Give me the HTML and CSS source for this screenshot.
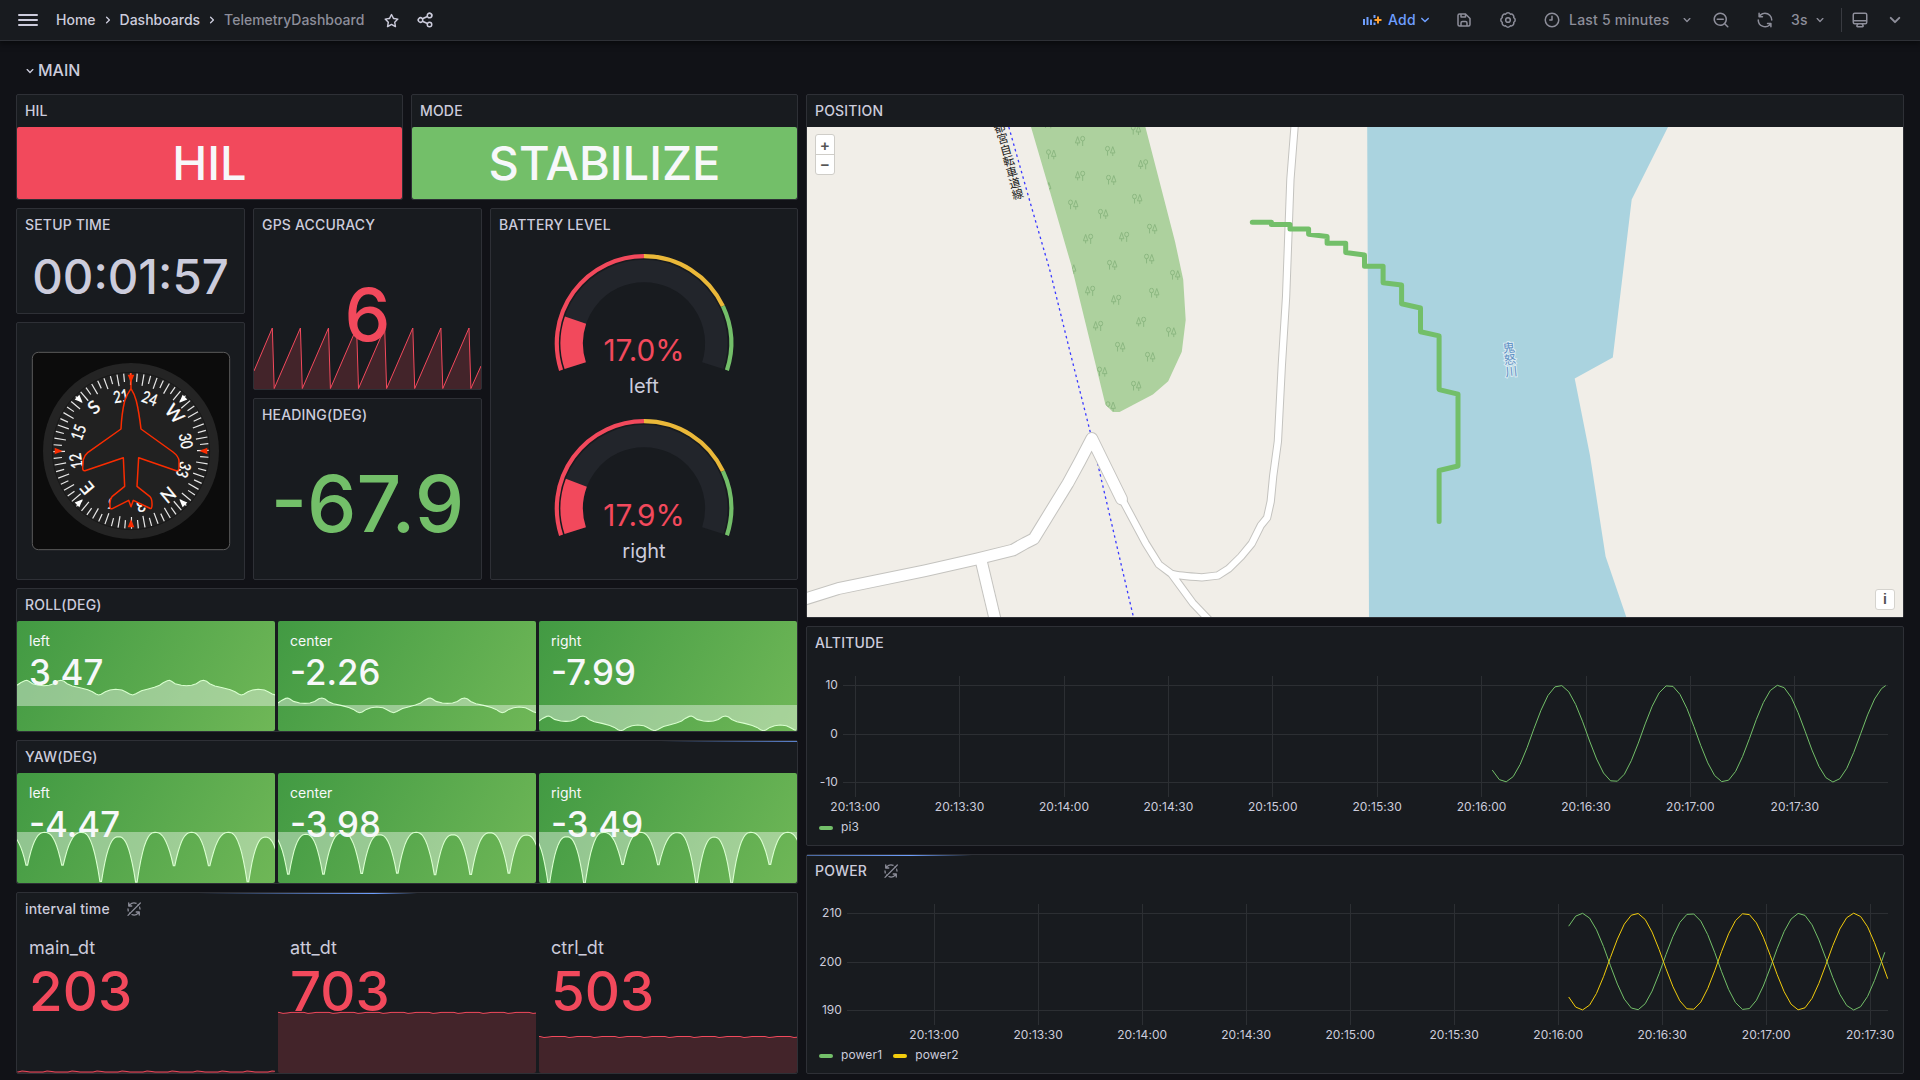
FILE: index.html
```html
<!DOCTYPE html>
<html lang="en">
<head>
<meta charset="utf-8">
<title>TelemetryDashboard - Dashboards</title>
<link rel="stylesheet" href="styles.css">
</head>
<body>
<svg class="defs" width="0" height="0" aria-hidden="true">
  <symbol id="i-down" viewBox="0 0 24 24"><path d="M17,9.17a1,1,0,0,0-1.41,0L12,12.71,8.46,9.17a1,1,0,0,0-1.41,0,1,1,0,0,0,0,1.42l4.24,4.24a1,1,0,0,0,1.42,0L17,10.59A1,1,0,0,0,17,9.17Z"/></symbol>
  <symbol id="i-right" viewBox="0 0 24 24"><path d="M14.83,11.29,10.59,7.05a1,1,0,0,0-1.42,0,1,1,0,0,0,0,1.41L12.71,12,9.17,15.54a1,1,0,0,0,0,1.41,1,1,0,0,0,.71.29,1,1,0,0,0,.71-.29l4.24-4.24A1,1,0,0,0,14.83,11.29Z"/></symbol>
  <symbol id="i-star" viewBox="0 0 24 24"><path d="M22,9.67A1,1,0,0,0,21.14,9l-5.69-.83L12.9,3a1,1,0,0,0-1.8,0L8.55,8.16,2.86,9a1,1,0,0,0-.81.68,1,1,0,0,0,.25,1l4.13,4-1,5.68A1,1,0,0,0,6.9,21.44L12,18.77l5.1,2.67a.93.93,0,0,0,.46.12,1,1,0,0,0,.59-.19,1,1,0,0,0,.4-1l-1-5.68,4.13-4A1,1,0,0,0,22,9.67Zm-6.15,4a1,1,0,0,0-.29.88l.72,4.2-3.76-2a1.06,1.06,0,0,0-.94,0l-3.76,2,.72-4.2a1,1,0,0,0-.29-.88l-3-3,4.21-.61a1,1,0,0,0,.76-.55L12,5.7l1.88,3.82a1,1,0,0,0,.76.55l4.21.61Z"/></symbol>
  <symbol id="i-share" viewBox="0 0 24 24"><path d="M18,14a4,4,0,0,0-3.08,1.48l-5.1-2.35a3.64,3.64,0,0,0,0-2.26l5.1-2.35A4.17,4.17,0,1,0,14,6a4.71,4.71,0,0,0,.07.71L8.79,9.14a4,4,0,1,0,0,5.72l5.28,2.43A4.71,4.71,0,0,0,14,18a4,4,0,1,0,4-4ZM18,4a2,2,0,1,1-2,2A2,2,0,0,1,18,4ZM6,14a2,2,0,1,1,2-2A2,2,0,0,1,6,14Zm12,6a2,2,0,1,1,2-2A2,2,0,0,1,18,20Z"/></symbol>
  <symbol id="i-save" viewBox="0 0 24 24"><path d="M20.71,9.29l-6-6a1,1,0,0,0-.32-.21A1.09,1.09,0,0,0,14,3H6A3,3,0,0,0,3,6V18a3,3,0,0,0,3,3H18a3,3,0,0,0,3-3V10A1,1,0,0,0,20.71,9.29ZM9,5h4V7H9Zm6,14H9V16a1,1,0,0,1,1-1h4a1,1,0,0,1,1,1Zm4-1a1,1,0,0,1-1,1H17V16a3,3,0,0,0-3-3H10a3,3,0,0,0-3,3v3H6a1,1,0,0,1-1-1V6A1,1,0,0,1,6,5H7V8A1,1,0,0,0,8,9h6a1,1,0,0,0,1-1V6.41l4,4Z"/></symbol>
  <symbol id="i-gear" viewBox="0 0 24 24"><g fill="none" stroke="currentColor" stroke-width="2" stroke-linejoin="round" transform="translate(12 12)"><path d="M3.18-7.67A3.6 3.6 0 0 1 7.67-3.18A3.6 3.6 0 0 1 7.67 3.18A3.6 3.6 0 0 1 3.18 7.67A3.6 3.6 0 0 1-3.18 7.67A3.6 3.6 0 0 1-7.67 3.18A3.6 3.6 0 0 1-7.67-3.18A3.6 3.6 0 0 1-3.18-7.67A3.6 3.6 0 0 1 3.18-7.67Z"/><circle r="3.1"/></g></symbol>
  <symbol id="i-clock" viewBox="0 0 24 24"><path d="M12,2A10,10,0,1,0,22,12,10,10,0,0,0,12,2Zm0,18a8,8,0,1,1,8-8A8,8,0,0,1,12,20ZM12,6a1,1,0,0,0-1,1v4H9a1,1,0,0,0,0,2h3a1,1,0,0,0,1-1V7A1,1,0,0,0,12,6Z"/></symbol>
  <symbol id="i-zoomout" viewBox="0 0 24 24"><path d="M21.71,20.29,18,16.61A9,9,0,1,0,16.61,18l3.68,3.68a1,1,0,0,0,1.42,0A1,1,0,0,0,21.71,20.29ZM11,18a7,7,0,1,1,7-7A7,7,0,0,1,11,18Zm4-8H7a1,1,0,0,0,0,2h8a1,1,0,0,0,0-2Z"/></symbol>
  <symbol id="i-sync" viewBox="0 0 24 24"><path d="M19.91,15.51H15.38a1,1,0,0,0,0,2h2.4A8,8,0,0,1,4,12a1,1,0,1,0-2,0,10,10,0,0,0,16.88,7.23V21a1,1,0,0,0,2,0V16.5A1,1,0,0,0,19.91,15.51ZM12,2A10,10,0,0,0,5.12,4.77V3a1,1,0,0,0-2,0V7.5a1,1,0,0,0,1,1h4.5a1,1,0,0,0,0-2H6.22A8,8,0,0,1,20,12a1,1,0,0,0,2,0A10,10,0,0,0,12,2Z"/></symbol>
  <symbol id="i-syncoff" viewBox="0 0 24 24"><use href="#i-sync"/><path d="M1 20L20 1M4 23L23 4" stroke="#181b1f" stroke-width="2.2"/><path d="M3 21.500L21.500 3" stroke="currentColor" stroke-width="1.900" stroke-linecap="round"/></symbol>
  <symbol id="i-monitor" viewBox="0 0 24 24"><path d="M19,2H5A3,3,0,0,0,2,5V15a3,3,0,0,0,3,3H7.64l-.58,1a2,2,0,0,0,0,2,2,2,0,0,0,1.75,1h6.46A2,2,0,0,0,17,21a2,2,0,0,0,0-2l-.59-1H19a3,3,0,0,0,3-3V5A3,3,0,0,0,19,2ZM8.77,20,10,18H14l1.2,2ZM20,15a1,1,0,0,1-1,1H5a1,1,0,0,1-1-1V14H20Zm0-3H4V5A1,1,0,0,1,5,4H19a1,1,0,0,1,1,1Z"/></symbol>
  <symbol id="tree-round" viewBox="0 0 10 10"><g fill="none" stroke="#8ab680" stroke-width=".9"><ellipse cx="2.400" cy="2.900" rx="1.900" ry="2.200"/><path d="M2.400 5V9.500M7.400 1L5.200 7H9.600ZM7.400 7V10"/></g></symbol>
  <symbol id="tree-pine" viewBox="0 0 10 10"><g fill="none" stroke="#8ab680" stroke-width=".9"><ellipse cx="7.300" cy="2.900" rx="1.900" ry="2.200"/><path d="M7.300 5V10M2.500 1L.4 7H4.600ZM2.500 7V9.500"/></g></symbol>
</svg>

<header class="topbar">
  <div class="menu"><i></i><i></i><i></i></div>
  <nav class="crumbs">
    <a>Home</a><svg class="ic s16"><use href="#i-right"/></svg>
    <a>Dashboards</a><svg class="ic s16"><use href="#i-right"/></svg>
    <span class="here">TelemetryDashboard</span>
  </nav>
  <svg class="ic s17 star"><use href="#i-star"/></svg>
  <svg class="ic s18"><use href="#i-share"/></svg>
  <div class="tools">
    <div class="tool add">
      <svg width="20" height="12" viewBox="0 0 20 12"><path d="M1 5h2v6H1zM4.500 3h2v8h-2zM8 5.500h2V11H8zM11.500 1h2v3h-2zM11.500 8.500h2V11h-2z" fill="#6e9fff"/><path d="M15 2.500h2V5h2.500v2H17v2.500h-2V7h-2.500V5H15z" fill="#ffa02e"/></svg>
      <span>Add</span><svg class="ic s18"><use href="#i-down"/></svg>
    </div>
    <div class="tool"><svg class="ic s18"><use href="#i-save"/></svg></div>
    <div class="tool"><svg class="ic s18"><use href="#i-gear"/></svg></div>
    <div class="tool time"><svg class="ic s18"><use href="#i-clock"/></svg><span>Last 5 minutes</span><svg class="ic s16"><use href="#i-down"/></svg></div>
    <div class="tool"><svg class="ic s18"><use href="#i-zoomout"/></svg></div>
    <div class="tool"><svg class="ic s18"><use href="#i-sync"/></svg></div>
    <div class="tool rate"><span>3s</span><svg class="ic s16"><use href="#i-down"/></svg></div>
    <div class="sep"></div>
    <div class="tool"><svg class="ic s18"><use href="#i-monitor"/></svg></div>
    <div class="tool"><svg class="ic s24"><use href="#i-down"/></svg></div>
  </div>
</header>

<main class="board">
  <div class="rowhead"><svg class="ic s16"><use href="#i-down"/></svg><span>MAIN</span></div>

  <section class="panel p-hil"><h2>HIL</h2><div class="fill red">HIL</div></section>
  <section class="panel p-mode"><h2>MODE</h2><div class="fill green">STABILIZE</div></section>
  <section class="panel p-setup"><h2>SETUP TIME</h2><div class="big plain">00:01:57</div></section>

  <section class="panel p-compass">
    <svg class="compass" width="200" height="200" viewBox="-300 -300 600 600">
      <rect x="-296" y="-296" width="592" height="592" rx="18" fill="#0c0c0c" stroke="#5b5b5b" stroke-width="3"/>
      <circle r="264" fill="#242424"/>
      <circle r="236" fill="#212121" stroke="#181818" stroke-width="3"/>
      <g id="rose"></g>
      <g id="marks"></g>
      <path transform="translate(-392 -752)" fill="#212121" stroke="#fa2c00" stroke-width="4.500" stroke-linejoin="round" d="M392 518V565Q403 582 408 602Q416 635 422 686L518 755Q535 768 536 782V803Q535 812 528 811L415 772L410 858L448 888Q456 896 455 915Q455 928 447 923L399 900L392 919L385 900L336 925Q328 928 329 915Q328 897 335 889L373 858L369 772L254 811Q247 812 247 803L249 778Q252 765 262 757L362 686Q364 640 373 602Q378 585 392 565"/>
    </svg>
  </section>

  <section class="panel p-gps"><h2>GPS ACCURACY</h2>
    <div class="stat"><svg class="spark" id="gps" width="227" height="148" viewBox="0 0 227 148"></svg><div class="big six">6</div></div>
  </section>
  <section class="panel p-heading"><h2>HEADING(DEG)</h2><div class="big deg">-67.9</div></section>

  <section class="panel p-battery"><h2>BATTERY LEVEL</h2>
    <svg class="gauge" data-value="17" data-text="17.0%" data-name="left" width="306" height="165" viewBox="0 0 306 165"></svg>
    <svg class="gauge" data-value="17.9" data-text="17.9%" data-name="right" width="306" height="165" viewBox="0 0 306 165"></svg>
  </section>

  <section class="panel p-roll"><h2>ROLL(DEG)</h2>
    <div class="cards">
      <div class="card"><svg class="spark" data-roll="0" viewBox="0 0 258 110"></svg><p>left</p><b>3.47</b></div>
      <div class="card"><svg class="spark" data-roll="17.7" viewBox="0 0 258 110"></svg><p>center</p><b>-2.26</b></div>
      <div class="card"><svg class="spark" data-roll="35.7" viewBox="0 0 258 110"></svg><p>right</p><b>-7.99</b></div>
    </div>
  </section>

  <section class="panel p-yaw"><div class="loading"><i class="l-yaw"></i></div><h2>YAW(DEG)</h2>
    <div class="cards">
      <div class="card"><svg class="spark" data-yaw="0" viewBox="0 0 258 110"></svg><p>left</p><b>-4.47</b></div>
      <div class="card"><svg class="spark" data-yaw="1" viewBox="0 0 258 110"></svg><p>center</p><b>-3.98</b></div>
      <div class="card"><svg class="spark" data-yaw="2" viewBox="0 0 258 110"></svg><p>right</p><b>-3.49</b></div>
    </div>
  </section>

  <section class="panel p-interval"><div class="loading"><i class="l-interval"></i></div><h2>interval time<svg class="ic s16 off"><use href="#i-syncoff"/></svg></h2>
    <div class="cards dt">
      <div class="card"><svg class="spark" data-dt="147" data-dir="-1" viewBox="0 0 258 148"></svg><p>main_dt</p><b>203</b></div>
      <div class="card"><svg class="spark" data-dt="87.400" data-dir="1" viewBox="0 0 258 148"></svg><p>att_dt</p><b>703</b></div>
      <div class="card"><svg class="spark" data-dt="111.500" data-dir="1" viewBox="0 0 258 148"></svg><p>ctrl_dt</p><b>503</b></div>
    </div>
  </section>

  <section class="panel p-map"><h2>POSITION</h2>
    <div class="map">
      <svg width="1096" height="490" viewBox="807 127 1096 490">
        <defs>
          <path id="minor" d="M1122 499L1145.400 542.800L1158.900 564.500L1171.400 573.800Q1178 576 1201.800 577.300L1217.900 575.500L1228.600 568.700L1241 556.600L1251.800 543.500L1260.700 525.600L1267.100 517.700L1270.700 501.500L1273.200 475.700L1277.900 441.200L1281.800 365.500L1286.100 296.600L1290.400 179.500L1294.600 126M1171.400 573.800L1192.900 603.100L1209 620"/>
          <path id="branch" d="M981 560L995.700 622"/>
          <path id="major" d="M802 600L838.200 588.600L925 570.700L976.800 559L1012.900 550.100L1025 543.200L1033.900 538.700L1067.900 483.300L1079.600 461.900L1091.800 438.500L1121.500 499"/>
          <clipPath id="wood"><path id="woodshape" d="M1031 127L1048.900 188L1071.400 265.600L1105.400 404.400L1112.900 412H1119.600L1152.900 394.400L1168.200 381.300L1181.800 351.700L1185.700 320L1183.200 279.400L1175 241.500L1145.400 127Z"/></clipPath>
        </defs>
        <path fill="#aad3df" d="M1367.200 127L1369 617H1626.300L1605.600 556.600L1589.900 455L1574.700 378.600L1612.800 357.600L1631.700 199.500L1668 127Z"/>
        <use href="#woodshape" fill="#add19e"/>
        <g id="trees" clip-path="url(#wood)"></g>
        <path fill="none" stroke="#3a3aff" stroke-width="1.300" stroke-dasharray="2.500 3.200" d="M1008.800 127L1031 205.400L1050 270.800L1070.400 353.400L1090.400 432.600L1112.500 527.300L1133.400 617"/>
        <g fill="none" stroke="#c4c3bf" stroke-linejoin="round">
          <use href="#minor" stroke-width="8.300"/><use href="#branch" stroke-width="12.800"/><use href="#major" stroke-width="12.800" stroke-linecap="round"/>
        </g>
        <g fill="none" stroke="#fff" stroke-linejoin="round">
          <use href="#minor" stroke-width="6.300"/><use href="#branch" stroke-width="10.800"/><use href="#major" stroke-width="10.800" stroke-linecap="round"/>
        </g>
        <text class="way" transform="translate(998 122) rotate(-15.300)">都宮自転車道線</text>
        <text class="river" transform="translate(1508.200 341.500) rotate(-6)">鬼怒川</text>
        <path fill="none" stroke="#73bf69" stroke-width="5" stroke-linecap="round" stroke-linejoin="round" d="M1252.300 222.300H1271.400V224.600H1290V229.100H1308.600V234.300L1327.100 236.400V243.200H1345.700V252.500L1364.500 255V266.300H1383.100V282.800L1401.600 284.900V303.800L1420.500 308V331.700L1439.100 335.900V389.600L1458 394.100V466L1439.100 470.500V521.500"/>
      </svg>
      <div class="zoomctl"><span>+</span><span>−</span></div>
      <div class="info">i</div>
    </div>
  </section>

  <section class="panel p-alt"><h2>ALTITUDE</h2>
    <svg class="chart" id="alt" width="1096" height="159" viewBox="0 0 1096 159"></svg>
    <div class="legend"><i class="sw-g"></i><span>pi3</span></div>
  </section>
  <section class="panel p-power"><div class="loading"><i class="l-power"></i></div><h2>POWER<svg class="ic s16 off"><use href="#i-syncoff"/></svg></h2>
    <svg class="chart" id="power" width="1096" height="159" viewBox="0 0 1096 159"></svg>
    <div class="legend"><i class="sw-g"></i><span>power1</span><i class="sw-y"></i><span>power2</span></div>
  </section>
</main>
<script src="charts.js"></script>
</body>
</html>
```
FILE: styles.css
```css
* { box-sizing: border-box; }
body {
  margin: 0;
  width: 1920px;
  height: 1080px;
  overflow: hidden;
  background: #111217;
  color: #ccccdc;
  font: 400 14px/22px Inter, "Noto Sans CJK JP", sans-serif;
}
.defs { position: absolute; }
.ic { fill: currentColor; flex: none; display: block; }
.s16 { width: 16px; height: 16px; }
.s17 { width: 17px; height: 17px; }
.s18 { width: 18px; height: 18px; }
.s24 { width: 24px; height: 24px; }

/* top bar */
.topbar {
  height: 41px;
  display: flex;
  align-items: center;
  padding: 0 13px 0 18px;
  background: #181b1f;
  border-bottom: 1px solid #2e3036;
  box-shadow: 0 1px 6px 1px #08090b;
  font-weight: 500;
}
.menu { display: grid; gap: 3px; width: 20px; margin-right: 18px; }
.menu i { height: 2px; background: #ccccdc; border-radius: 1px; }
.crumbs { display: flex; align-items: center; gap: 4px; width: 327px; }
.here { color: #8d8e9a; }
.star { margin-right: 16px; }
.tools {
  margin-left: auto;
  display: grid;
  grid-template-columns: 93px 44px 44px 169px 44px 35px 50px 10px 32px 24px;
  align-items: center;
  color: #8d8e9a;
}
.tool { display: flex; align-items: center; letter-spacing: .015em; }
.add { color: #6e9fff; }
.add span { margin: 0 0 0 6px; }
.time span { margin: 0 10px 0 8px; }
.rate span { margin-right: 4px; }
.sep { width: 1px; height: 24px; background: #393b41; }

/* dashboard grid */
.board {
  display: grid;
  grid-template-columns: repeat(24, 71px);
  grid-template-rows: repeat(27, 30px);
  gap: 8px;
  padding: 15px 16px 0;
}
.rowhead {
  grid-area: 1 / 1 / 2 / 25;
  display: flex;
  align-items: center;
  padding: 0 0 2px 6px;
  font-size: 16px;
  font-weight: 500;
}
.rowhead svg { margin-top: 2px; }
.panel {
  position: relative;
  display: flex;
  flex-direction: column;
  min-width: 0;
  min-height: 0;
  background: #181b1f;
  border: 1px solid #2e3036;
  border-radius: 2px;
}
.panel h2 {
  flex: none;
  display: flex;
  align-items: center;
  height: 32px;
  margin: 0;
  padding-left: 8px;
  font-size: 14px;
  font-weight: 500;
  letter-spacing: .0125em;
}
.off { margin-left: 16px; color: #8d8e9a; }
.p-hil { grid-area: 2 / 1 / span 3 / span 5; }
.p-mode { grid-area: 2 / 6 / span 3 / span 5; }
.p-setup { grid-area: 5 / 1 / span 3 / span 3; }
.p-compass { grid-area: 8 / 1 / span 7 / span 3; }
.p-gps { grid-area: 5 / 4 / span 5 / span 3; }
.p-heading { grid-area: 10 / 4 / span 5 / span 3; }
.p-battery { grid-area: 5 / 7 / span 10 / span 4; }
.p-roll { grid-area: 15 / 1 / span 4 / span 10; }
.p-yaw { grid-area: 19 / 1 / span 4 / span 10; }
.p-interval { grid-area: 23 / 1 / span 5 / span 10; }
.p-map { grid-area: 2 / 11 / span 14 / span 14; }
.p-alt { grid-area: 16 / 11 / span 6 / span 14; }
.p-power { grid-area: 22 / 11 / span 6 / span 14; }

/* single stats */
.fill, .big {
  flex: 1;
  display: flex;
  align-items: center;
  justify-content: center;
  font-size: 47px;
  font-weight: 500;
}
.plain { font-size: 47.400px; }
.fill { color: #f7f8fa; border-radius: 2px; }
.red { background: #f2495c; }
.green { background: #73bf69; }
.stat { position: relative; flex: 1; display: flex; }
.spark { position: absolute; left: 0; top: 0; width: 100%; height: 100%; }
.big { position: relative; }
.six { color: #f2495c; font-size: 73px; }
.deg { color: #73bf69; font-size: 78.600px; padding-bottom: 3px; }
.compass { display: block; margin: 28px auto 0; }
.compass text { fill: #fff; stroke: #fff; stroke-width: 1px; text-anchor: middle; font-family: Lato, sans-serif; }
.gauge { display: block; }
.gauge text { text-anchor: middle; }

/* stat cards */
.cards { flex: 1; display: grid; grid-template-columns: repeat(3, 1fr); gap: 3px; }
.card {
  position: relative;
  overflow: hidden;
  padding: 9px 12px 0;
  border-radius: 2px;
  color: #f7f8fa;
  background: linear-gradient(120deg, #429a43, #6fb757);
}
.card p { position: relative; margin: 0; font-size: 14px; line-height: 21px; }
.card b { position: relative; display: block; font-size: 34.800px; line-height: 42px; font-weight: 500; }
.dt .card { background: none; color: #ccccdc; }
.dt p { font-size: 18px; line-height: 28px; }
.dt b { font-size: 54.600px; line-height: 58px; color: #f2495c; }

/* loading bars run along the top edge of a panel */
.loading { position: absolute; left: 0; right: 0; top: 0; height: 1px; overflow: hidden; }
.loading i {
  display: block;
  width: 28%;
  height: 1px;
  background: linear-gradient(90deg, rgba(110, 159, 255, 0), #6e9fff 80%, rgba(110, 159, 255, 0));
}
.l-yaw { margin-left: 644px; }
.l-interval { margin-left: 182px; }
.l-power { margin-left: -142px; }

/* map */
.map { position: relative; flex: 1; background: #f1eee8; overflow: hidden; }
.map svg { display: block; }
.way, .river { writing-mode: vertical-rl; font-family: "Noto Sans CJK JP", sans-serif; }
.way { fill: #222; font-size: 11.500px; }
.river { fill: #5b8fc4; font-size: 12px; stroke: #dcebf2; stroke-width: 2px; paint-order: stroke; }
.zoomctl {
  position: absolute;
  left: 8px;
  top: 7px;
  width: 20px;
  border: 1px solid #cfcdc8;
  border-radius: 3px;
  background: #fff;
  color: #555;
  font: 700 15px/21px "Liberation Sans", sans-serif;
  text-align: center;
}
.zoomctl span { display: block; height: 19px; }
.zoomctl span + span { border-top: 1px solid #cfcdc8; height: 20px; line-height: 20px; }
.info {
  position: absolute;
  right: 8px;
  bottom: 7px;
  width: 20px;
  height: 21px;
  border: 1px solid #d5d3ce;
  border-radius: 3px;
  background: #fff;
  color: #555;
  font: 700 14px/19px "Liberation Sans", sans-serif;
  text-align: center;
}

/* time series */
.chart { display: block; }
.chart text { fill: #ccccdc; font-size: 12px; letter-spacing: .005em; }
.legend { display: flex; align-items: center; padding-left: 12px; height: 18px; font-size: 12px; letter-spacing: .012em; }
.legend i { width: 14px; height: 4px; border-radius: 2px; margin: 2px 8px 0 0; }
.legend span { margin-right: 11px; }
.sw-g { background: #73bf69; }
.sw-y { background: #f2cc0c; }
```
FILE: charts.js
```js
const NS = "http://www.w3.org/2000/svg";
function add(parent, tag, attrs, text) {
  const el = document.createElementNS(NS, tag);
  for (const k in attrs) el.setAttribute(k, attrs[k]);
  if (text !== undefined) el.textContent = text;
  parent.appendChild(el);
  return el;
}
const toPath = pts => "M" + pts.map(p => p[0].toFixed(1) + " " + p[1].toFixed(1)).join("L");

// time series panels
function drawChart(id, left, ticksX, rows, series) {
  const svg = document.getElementById(id);
  rows.forEach(([label, y]) => {
    add(svg, "rect", { x: left, y, width: 1081 - left, height: 1, fill: "#2c2f33" });
    add(svg, "text", { x: left - 5, y: y + 4, "text-anchor": "end" }, label);
  });
  ticksX.forEach((x, i) => {
    add(svg, "rect", { x: Math.floor(x), y: 17, width: 1, height: 121, fill: "#2c2f33" });
    const min = 13 + Math.floor(i / 2);
    add(svg, "text", { x: x, y: 152, "text-anchor": "middle" }, "20:" + min + ":" + (i % 2 ? "30" : "00"));
  });
  series.forEach(s => {
    const pts = [];
    for (let x = s.from; x < s.to; x += 6.95) pts.push(x);
    pts.push(s.to);
    const d = toPath(pts.map(x => [x, 74.6 + s.amp * Math.cos(2 * Math.PI * (x - s.peak) / s.period)]));
    add(svg, "path", { d, fill: "none", stroke: s.color, "stroke-width": 1, "stroke-linejoin": "round" });
  });
}
const tickList = (start, step) => Array.from({ length: 10 }, (_, i) => start + step * i);
drawChart("alt", 36, tickList(48.2, 104.4), [["10", 26], ["0", 75], ["-10", 123]],
  [{ from: 685.3, to: 1078.7, peak: 697.8, amp: 48.4, period: 109.5, color: "#73bf69" }]);
drawChart("power", 40, tickList(127.2, 104), [["210", 26], ["200", 75], ["190", 123]], [
  { from: 761.7, to: 1077.8, peak: 774.7, amp: -48.4, period: 109, color: "#73bf69" },
  { from: 761.7, to: 1080.7, peak: 774.7, amp: 48.4, period: 109, color: "#f2cc0c" }
]);

// GPS sawtooth
{
  const pts = [[0, 130]];
  for (let x = 18.3; x < 227; x += 28.1) pts.push([x, 87], [x + 1.9, 147.5]);
  pts.push([227, 125]);
  const svg = document.getElementById("gps");
  add(svg, "path", { d: toPath(pts) + "L227 148L0 148Z", fill: "#f2495c", "fill-opacity": .2 });
  add(svg, "path", { d: toPath(pts), fill: "none", stroke: "#f2495c", "stroke-width": 1 });
}

// coloured card sparklines: area between curve and the zero line
function drawArea(svg, pts, zero) {
  add(svg, "path", { d: toPath(pts) + "L258 " + zero + "L0 " + zero + "Z", fill: "#fff", "fill-opacity": .4 });
  add(svg, "path", { d: toPath(pts), fill: "none", stroke: "#d9ffcf", "stroke-width": 1.1 });
}
const wave = [[0, 316], [7, 308], [15, 302], [19, 301], [23, 304], [30, 311], [42, 316], [52, 317], [62, 316], [71, 311], [79, 303], [85, 301], [91, 304], [97, 311], [107, 318], [122, 323], [137, 329], [146, 335], [153, 342], [158, 345], [163, 343], [171, 335], [180, 330], [191, 328], [203, 330], [210, 335], [218, 342], [224, 345], [230, 341], [241, 332], [254, 327], [266, 322]];
document.querySelectorAll("[data-roll]").forEach(svg => {
  const pts = [];
  for (let n = 0; n < 2; n++) wave.forEach(([x, y]) => pts.push([(x + 276 * n) / 1.9358, y / 3 - 41 + Number(svg.dataset.roll)]));
  drawArea(svg, pts.filter(p => p[0] <= 259), 84.5);
  add(svg, "rect", { x: 0, y: 84, width: 258, height: 1, fill: "#fff", "fill-opacity": .25 });
});
const yaw = [
  { v: [[19, 389], [88, 389], [162, 438], [231, 440], [304, 391], [372, 391], [447, 439], [515, 440]], t: [300, 291, 291, 304, 291, 291, 291, 305] },
  { v: [[20, 416], [88, 416], [162, 414], [231, 413], [304, 418], [373, 417], [447, 413], [515, 414]], t: [298, 297, 292, 298, 291, 298, 292, 299] },
  { v: [[19, 443], [88, 443], [162, 387], [231, 388], [305, 443], [373, 443], [447, 387], [516, 389]], t: [304, 304, 291, 291, 292, 305, 291, 291] }
];
document.querySelectorAll("[data-yaw]").forEach(svg => {
  const s = yaw[svg.dataset.yaw], pts = [];
  let px = -50, pv = s.v[0][1];
  s.v.forEach(([x, v], i) => {
    const mid = (px + x) / 2, half = (x - px) / 2 - 1.5;
    for (let k = -10; k <= 10; k++) {
      const t = k / 10, foot = t < 0 ? pv : v;
      pts.push([(mid + half * t) / 1.9358, (s.t[i] + (foot - s.t[i]) * Math.pow(Math.abs(t), 2.5)) / 3 - 37.6]);
    }
    px = x; pv = v;
  });
  drawArea(svg, pts, 59);
});

// interval sparklines
document.querySelectorAll("[data-dt]").forEach(svg => {
  const base = Number(svg.dataset.dt), dir = Number(svg.dataset.dir), pts = [];
  for (let x = -12; x < 280; x += 25) pts.push([x, base], [x + 13, base], [x + 17, base + dir], [x + 21, base + dir * .6]);
  add(svg, "path", { d: toPath(pts) + "L280 148L-12 148Z", fill: "#f2495c", "fill-opacity": .2 });
  add(svg, "path", { d: toPath(pts), fill: "none", stroke: "#f2495c", "stroke-width": 1 });
});

// battery gauges, 216 degree sweep
function arc(cx, cy, r, width, from, to, color, svg) {
  const at = f => { const a = Math.PI * (0.9 + 1.2 * f); return [cx + r * Math.cos(a), cy + r * Math.sin(a)]; };
  const a = at(from), b = at(to), large = (to - from) * 216 > 180 ? 1 : 0;
  add(svg, "path", { d: `M${a}A${r} ${r} 0 ${large} 1 ${b}`, fill: "none", stroke: color, "stroke-width": width });
}
document.querySelectorAll(".gauge").forEach(svg => {
  const v = svg.dataset.value / 100, cx = 153, cy = 102.3;
  arc(cx, cy, 72.3, 22.4, 0, 1, "#22252b", svg);
  arc(cx, cy, 72.3, 22.4, 0, v, "#f2495c", svg);
  arc(cx, cy, 87.2, 4.2, 0, .5, "#f2495c", svg);
  arc(cx, cy, 87.2, 4.2, .5, .8, "#eab839", svg);
  arc(cx, cy, 87.2, 4.2, .8, 1, "#73bf69", svg);
  add(svg, "text", { x: cx, y: 120, "font-size": 29.8, fill: "#f2495c" }, svg.dataset.text);
  add(svg, "text", { x: cx, y: 151.5, "font-size": 20, fill: "#ccccdc" }, svg.dataset.name);
});

// compass rose
{
  const rose = document.getElementById("rose"), marks = document.getElementById("marks"), rot = 139.6;
  for (let a = 0; a < 360; a += 5)
    add(rose, "path", { d: a % 10 ? "M0-233V-208" : "M0-233V-198", stroke: "#e8e8e8", "stroke-width": 3.6, transform: `rotate(${a + rot})` });
  ["N", "3", "6", "E", "12", "15", "S", "21", "24", "W", "30", "33"].forEach((t, i) => {
    const cardinal = i % 3 === 0;
    const attrs = { y: cardinal ? -153 : -150, "font-size": cardinal ? 54 : 49, transform: `rotate(${i * 30 + rot})` };
    if (t.length > 1) { attrs.textLength = 46; attrs.lengthAdjust = "spacingAndGlyphs"; }
    add(rose, "text", attrs, t);
  });
  for (let i = 0; i < 8; i++)
    add(marks, "path", { d: "M-10-229H10L0-205Z", fill: i % 2 ? "#fff" : "#fa2c00", transform: `rotate(${i * 45})` });
}

// wood pattern on the map
[["round", 1051, 154], ["pine", 1080, 140.6], ["round", 1110, 150.6], ["round", 1135.7, 129.6], ["pine", 1143, 164], ["pine", 1080, 175.4], ["round", 1111, 179.5], ["round", 1046, 186.4], ["round", 1137, 198.5], ["round", 1073, 204.3], ["round", 1103, 213.6], ["round", 1152, 228.4], ["pine", 1088, 238.4], ["pine", 1124, 236.4], ["round", 1149, 258.4], ["round", 1112, 264.6], ["round", 1071, 268.7], ["round", 1175, 274.6], ["pine", 1090, 290.4], ["pine", 1116, 299.4], ["round", 1154, 292.5], ["pine", 1141, 321.4], ["pine", 1098, 325.5], ["round", 1171, 331.7], ["round", 1120, 346.5], ["round", 1150, 356.5], ["round", 1102, 371.3], ["round", 1136, 385.5], ["round", 1110.4, 406], ["round", 1048, 123]]
  .forEach(([kind, x, y]) => add(document.getElementById("trees"), "use", { href: "#tree-" + kind, x: x - 5, y: y - 5, width: 10.5, height: 10.5 }));
```
